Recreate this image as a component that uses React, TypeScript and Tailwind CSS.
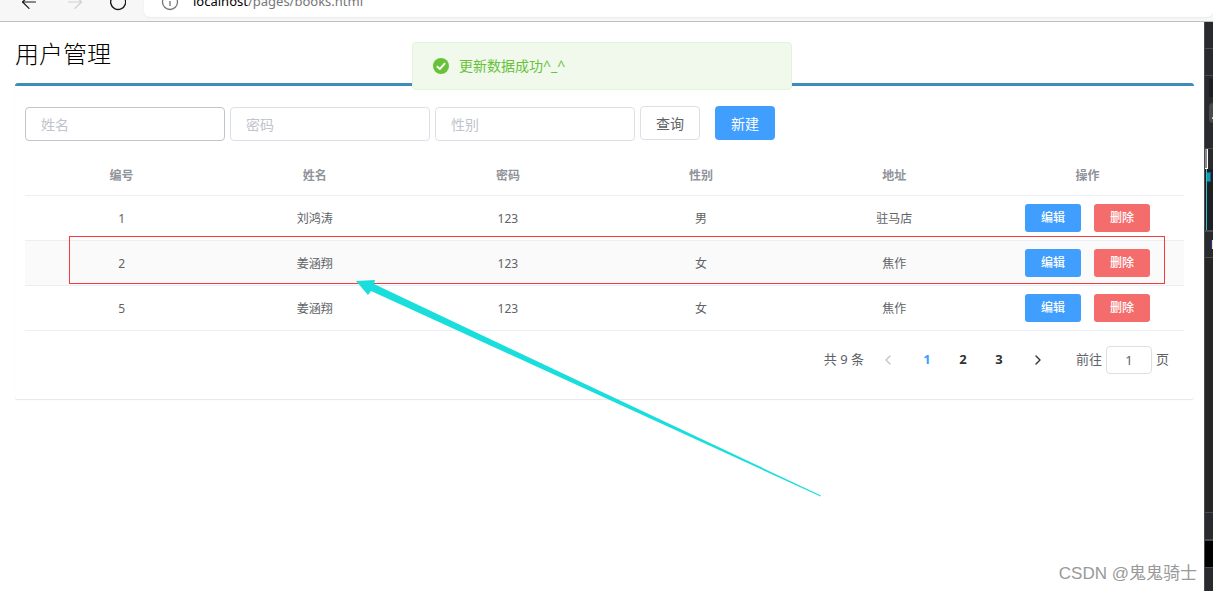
import { ArrowLeft, ArrowRight, ChevronLeft, ChevronRight } from "lucide-react";

const columns = ["编号", "姓名", "密码", "性别", "地址", "操作"];

const users = [
  { id: 1, name: "刘鸿涛", password: "123", gender: "男", address: "驻马店" },
  { id: 2, name: "姜涵翔", password: "123", gender: "女", address: "焦作" },
  { id: 5, name: "姜涵翔", password: "123", gender: "女", address: "焦作" },
];

function BrowserBar() {
  return (
    <header className="flex h-[22px] items-end border-b border-[#bfbfbf] bg-[#f7f7f7] pb-1">
      <div className="flex h-[30px] w-36 shrink-0 items-center gap-6 pl-[18px]">
        <button type="button" aria-label="后退" className="text-[#1a1a1a]">
          <ArrowLeft size={22} strokeWidth={1.3} />
        </button>
        <button type="button" aria-label="前进" className="text-[#cfcfcf]">
          <ArrowRight size={22} strokeWidth={1.3} />
        </button>
        <button type="button" aria-label="刷新" className="text-[#1a1a1a]">
          <svg width="16" height="20" viewBox="2 0 16 20" fill="none" stroke="currentColor" strokeWidth="1.4">
            <path d="M16.5 6A7.5 7.5 0 1 1 10 2.5M16.5 1.5v4.5h-4" />
          </svg>
        </button>
      </div>
      <div className="flex h-[30px] flex-1 items-center gap-3 rounded-b-md bg-white pl-4 shadow-xs">
        <svg width="20" height="20" viewBox="0 0 20 20" fill="none" stroke="#767676" strokeWidth="1.3">
          <circle cx="10" cy="10" r="7.5" />
          <path d="M10 9v5M10 6v1.5" />
        </svg>
        <span className="pl-px text-[13px] text-[#767676]">
          <span className="text-black">localhost</span>/pages/books.html
        </span>
      </div>
    </header>
  );
}

function Message() {
  return (
    <div
      role="status"
      className="absolute left-1/2 top-5 flex h-12 w-[380px] -translate-x-1/2 items-center gap-[10px] rounded border border-[#e1f3d8] bg-[#f0f9eb] px-5 text-sm text-[#67c23a]"
    >
      <svg width="16" height="16" viewBox="0 0 16 16">
        <circle cx="8" cy="8" r="8" fill="#67c23a" />
        <path d="M3.8 8.2 6.9 11l5.2-5.8" fill="none" stroke="#fff" strokeWidth="1.9" />
      </svg>
      更新数据成功^_^
    </div>
  );
}

function SearchBar() {
  const input =
    "h-[34px] w-[200px] rounded border bg-white px-[15px] text-sm text-[#606266] outline-none placeholder:text-[#c0c4cc]";
  return (
    <form className="flex h-[35px] items-end gap-[5px]">
      <input aria-label="姓名" placeholder="姓名" className={`${input} border-[#c0c4cc]`} />
      <input aria-label="密码" placeholder="密码" className={`${input} border-[#dcdfe6]`} />
      <input aria-label="性别" placeholder="性别" className={`${input} border-[#dcdfe6]`} />
      <div className="flex gap-[15px] self-start">
        <button
          type="button"
          className="h-[34px] w-[60px] rounded border border-[#dcdfe6] bg-white pt-px text-sm text-[#606266]"
        >
          查询
        </button>
        <button type="button" className="h-[34px] w-[60px] rounded bg-[#409eff] pt-px text-sm text-white">
          新建
        </button>
      </div>
    </form>
  );
}

function UserTable() {
  return (
    <table className="mt-[14px] w-full table-fixed border-collapse text-center text-xs text-[#606266]">
      <thead>
        <tr className="h-10 border-b border-[#ebeef5] text-[#909399]">
          {columns.map((column) => (
            <th key={column} scope="col" className="pt-0.5 font-bold">
              {column}
            </th>
          ))}
        </tr>
      </thead>
      <tbody>
        {users.map((user) => (
          <tr key={user.id} className="h-[45px] border-b border-[#ebeef5] even:bg-[#fafafa]">
            <td className="pt-0.5">{user.id}</td>
            <td className="pt-0.5">{user.name}</td>
            <td className="pt-0.5">{user.password}</td>
            <td className="pt-0.5">{user.gender}</td>
            <td className="pt-0.5">{user.address}</td>
            <td>
              <div className="flex justify-center gap-[13px] font-medium text-white">
                <button type="button" className="h-7 w-14 rounded-[3px] bg-[#409eff]">
                  编辑
                </button>
                <button type="button" className="h-7 w-14 rounded-[3px] bg-[#f56c6c]">
                  删除
                </button>
              </div>
            </td>
          </tr>
        ))}
      </tbody>
    </table>
  );
}

function Pagination() {
  return (
    <nav aria-label="分页" className="mt-[15px] flex h-7 items-center justify-end pr-[15px] text-[13px] text-[#606266]">
      <span className="mr-[10px]">共 9 条</span>
      <button type="button" aria-label="上一页" disabled className="flex w-7 justify-center text-[#c0c4cc]">
        <ChevronLeft size={16} />
      </button>
      <div className="mx-[7px] flex font-bold text-[#303133]">
        <button type="button" aria-current="page" className="w-9 text-[#409eff]">
          1
        </button>
        <button type="button" className="w-9">
          2
        </button>
        <button type="button" className="w-9">
          3
        </button>
      </div>
      <button type="button" aria-label="下一页" className="flex w-7 justify-center text-[#303133]">
        <ChevronRight size={16} />
      </button>
      <label className="ml-6 flex items-center gap-1">
        前往
        <input
          defaultValue="1"
          className="h-7 w-[46px] rounded border border-[#dcdfe6] text-center text-[#606266] outline-none"
        />
        页
      </label>
    </nav>
  );
}

// Edge of the editor window behind the browser
function EditorEdge() {
  return (
    <aside className="flex w-[9px] shrink-0 flex-col border-l border-[#4a4b4f] bg-[#292a2e]">
      <div className="h-[27px] border-b border-[#4a4b4f]" />
      <div className="h-[27px] border-b border-[#4a4b4f]" />
      <div className="flex h-[73px] flex-col items-end border-b border-[#4a4b4f]">
        <div className="mt-[3px] h-[18px] w-1 bg-[#1f1f23]" />
        <div className="mt-[6px] flex h-5 w-1 items-end justify-end rounded-l bg-[#4a4a4a]">
          <div className="mb-1 h-0.5 w-px bg-[#b8c4ff]" />
        </div>
      </div>
      <div className="h-5 w-[3px] border-r border-b border-white bg-[#8a8a8a]" />
      <div className="flex h-[61px] bg-[#1e1f22] pl-px">
        <div className="w-px bg-[#2fc4c4]" />
        <div className="mt-[3px] h-[10px] w-1 border border-l-0 border-[#0b5c94] bg-[#159aa8]" />
      </div>
      <div className="flex h-7 justify-end border-t-2 border-b border-[#4a4b4f]">
        <div className="mt-2 h-[9px] w-[2px] border-l border-[#2b2f9c] bg-[#e6e0d0]" />
      </div>
      <div className="h-[255px] border-b border-[#4a4b4f] bg-[#262626]" />
      <div className="h-7 border-b-2 border-[#4a4b4f]" />
      <div className="h-[27px] border-b border-[#4a4b4f] bg-black" />
    </aside>
  );
}

function Annotations() {
  return (
    <svg className="pointer-events-none absolute left-0 top-0" width="1204" height="569" viewBox="0 22 1204 569">
      <rect x="69.5" y="236.5" width="1095" height="47" fill="none" stroke="#f53b3b" />
      <path d="M356 281 375 280 374 284 821 495.6 820.6 496.4 371 291 368 295Z" fill="#1adedc" />
    </svg>
  );
}

export default function App() {
  return (
    <div className="flex min-h-screen flex-col overflow-hidden bg-white font-['Noto_Sans','Noto_Sans_CJK_SC',sans-serif]">
      <BrowserBar />
      <div className="flex flex-1">
        <main className="relative min-w-0 flex-1 pl-[15px] pr-[10px]">
          <h1 className="pt-[15px] pb-[13px] text-2xl leading-[33px] font-light text-black">用户管理</h1>
          <section className="rounded-[3px] border-t-3 border-[#3c8dbc] px-[10px] pb-[25px] pt-5 shadow-[0_1px_1px_rgba(0,0,0,0.1)]">
            <SearchBar />
            <UserTable />
            <Pagination />
          </section>
          <Message />
          <Annotations />
          <p className="absolute bottom-[5px] right-[7px] font-['Liberation_Sans','Noto_Sans_CJK_SC',sans-serif] text-[17px] leading-6 text-[#999999]">
            CSDN @鬼鬼骑士
          </p>
        </main>
        <EditorEdge />
      </div>
    </div>
  );
}
